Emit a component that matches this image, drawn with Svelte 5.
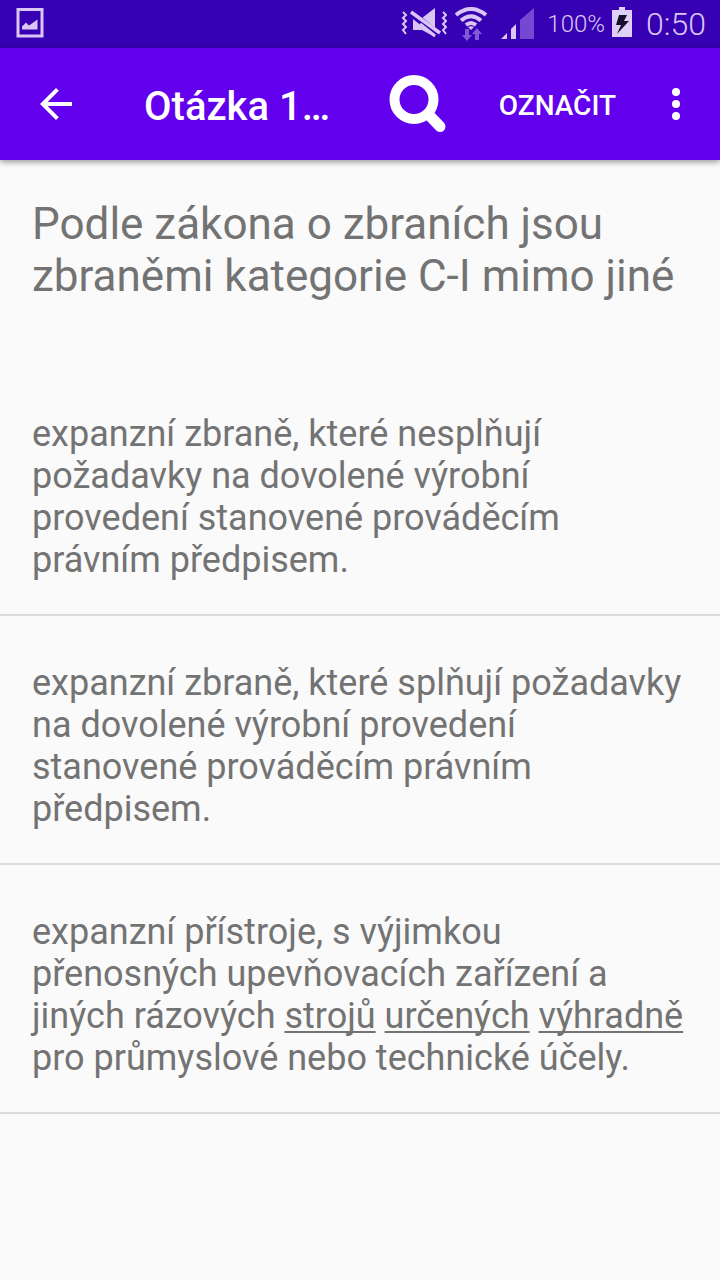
<script lang="ts">
  const title = 'Otázka 1…';
  const question = 'Podle zákona o zbraních jsou zbraněmi kategorie C-I mimo jiné';

  type Part = { text: string; marked?: boolean };

  const answers: Part[][] = [
    [{ text: 'expanzní zbraně, které nesplňují požadavky na dovolené výrobní provedení stanovené prováděcím právním předpisem.' }],
    [{ text: 'expanzní zbraně, které splňují požadavky na dovolené výrobní provedení stanovené prováděcím právním předpisem.' }],
    [
      { text: 'expanzní přístroje, s výjimkou přenosných upevňovacích zařízení a jiných rázových ' },
      { text: 'strojů', marked: true },
      { text: ' ' },
      { text: 'určených', marked: true },
      { text: ' ' },
      { text: 'výhradně', marked: true },
      { text: ' pro průmyslové nebo technické účely.' }
    ]
  ];
</script>

<div class="status">
  <svg class="picture" width="28" height="32" viewBox="0 0 28 32" aria-hidden="true">
    <rect x="2" y="1.500" width="24" height="26.500" fill="none" stroke="#d9c6f5" stroke-width="3" />
    <path d="M6 21.500V18.500L10 14.500L13 17.500L21.500 11.500V21.500Z" fill="#d9c6f5" />
  </svg>

  <svg width="46" height="32" viewBox="0 0 46 32" aria-hidden="true">
    <g fill="none" stroke="#d9c6f5" stroke-width="2">
      <path d="M2 4L5 7L2 10L5 13L2 16L5 19L2 22L5 26" />
      <path d="M42 4L45 7L42 10L45 13L42 16L45 19L42 22L45 26" />
    </g>
    <path d="M12 10H21L34 0V29L21 22H12Z" fill="#d9c6f5" />
    <path d="M10 5L39 28" stroke="#3700b3" stroke-width="7" />
    <path d="M10 4L39 25" stroke="#d9c6f5" stroke-width="3.500" />
    <path d="M19 16L34 28" stroke="#d9c6f5" stroke-width="3" />
  </svg>

  <svg class="wifi" width="34" height="34" viewBox="0 0 34 34" aria-hidden="true">
    <g fill="none" stroke="#d9c6f5" stroke-width="4">
      <path d="M2 8Q17 -4 32 8" />
      <path d="M7 13.500Q17 5 27 13.500" />
      <path d="M12 18Q17 14 22 18" />
    </g>
    <path d="M14 20Q17 18.500 20 20L17 23Z" fill="#d9c6f5" />
    <path d="M11 22H15V28H18L13 34L8 28H11Z" fill="#8059d6" />
    <path d="M21 33H25V27H28L23 21L18 27H21Z" fill="#8059d6" />
  </svg>

  <svg class="signal" width="34" height="32" viewBox="0 0 34 32" aria-hidden="true">
    <path d="M1 31L7 25V31Z" fill="#d9c6f5" />
    <path d="M11 31V21L16 16V31Z" fill="#d9c6f5" />
    <path d="M20 31V12L34 0V31Z" fill="#7448d2" />
  </svg>

  <span class="percent">100%</span>

  <svg class="battery" width="20" height="34" viewBox="0 0 20 34" aria-hidden="true">
    <path d="M7 0H13V3H20V30H0V3H7Z" fill="#e0cff7" />
    <path d="M7 8H15L12 14H17L5 27L9 18H4Z" fill="#17102a" />
  </svg>

  <span class="clock">0:50</span>
</div>

<header>
  <button class="back" aria-label="Zpět">
    <svg width="48" height="48" viewBox="0 0 24 24" fill="#fff">
      <path d="M20 11H7.830l5.590-5.590L12 4l-8 8 8 8 1.410-1.410L7.830 13H20v-2z" />
    </svg>
  </button>
  <h1>{title}</h1>
  <button class="search" aria-label="Hledat">
    <svg width="60" height="60" viewBox="0 0 60 60" fill="none" stroke="#fff">
      <circle cx="25" cy="25.500" r="19.500" stroke-width="10" />
      <path d="M40 41L51 52.500" stroke-width="11" stroke-linecap="round" />
    </svg>
  </button>
  <button class="mark">OZNAČIT</button>
  <button class="more" aria-label="Další možnosti">
    <svg width="48" height="48" viewBox="0 0 24 24" fill="#fff">
      <circle cx="12" cy="6" r="2" />
      <circle cx="12" cy="12" r="2" />
      <circle cx="12" cy="18" r="2" />
    </svg>
  </button>
</header>

<main>
  <h2>{question}</h2>
  <ul>
    {#each answers as answer}
      <li>
        <button class="answer">{#each answer as part}{#if part.marked}<u>{part.text}</u>{:else}{part.text}{/if}{/each}</button>
      </li>
    {/each}
  </ul>
</main>

<style>
  :global(body) {
    background: #fafafa;
    font-family: Roboto, sans-serif;
  }

  button {
    border: none;
    background: none;
    padding: 0;
    font-family: inherit;
    cursor: pointer;
  }

  svg {
    display: block;
    flex-shrink: 0;
  }

  .status {
    display: flex;
    align-items: center;
    height: 48px;
    padding: 0 14px 0 16px;
    box-sizing: border-box;
    background: #3700b3;
    color: #d9c6f5;
  }

  .picture {
    margin-right: auto;
  }

  .wifi {
    margin-left: 7px;
  }

  .signal {
    margin-left: 12px;
  }

  .percent {
    margin-left: 13px;
    font-size: 24px;
    font-weight: 300;
  }

  .battery {
    margin-left: 7px;
  }

  .clock {
    margin-left: 14px;
    font-size: 32px;
    font-weight: 300;
  }

  header {
    position: relative;
    display: flex;
    align-items: center;
    height: 112px;
    padding: 0 20px 0 32px;
    box-sizing: border-box;
    background: #6200ee;
    box-shadow: 0 2px 6px rgba(0, 0, 0, 0.4);
    color: #fff;
  }

  h1 {
    flex: 1;
    min-width: 0;
    margin: 0 52px 0 64px;
    padding-top: 4px;
    white-space: nowrap;
    font-size: 40px;
    font-weight: 500;
  }

  .mark {
    margin: 0 36px 0 50px;
    padding-top: 2px;
    color: #fff;
    font-size: 28px;
    font-weight: 500;
  }

  h2 {
    margin: 0;
    padding: 38px 32px 65px;
    color: #737373;
    font-size: 44px;
    line-height: 52px;
    font-weight: 400;
  }

  ul {
    margin: 0;
    padding: 0;
    list-style: none;
  }

  li {
    border-bottom: 2px solid #dcdcdc;
  }

  .answer {
    display: block;
    width: 100%;
    padding: 46px 32px 33px;
    color: #737373;
    font-size: 36px;
    line-height: 42px;
    text-align: left;
  }

  u {
    text-decoration-thickness: 2px;
    text-underline-offset: 3px;
    text-decoration-skip-ink: none;
  }
</style>
